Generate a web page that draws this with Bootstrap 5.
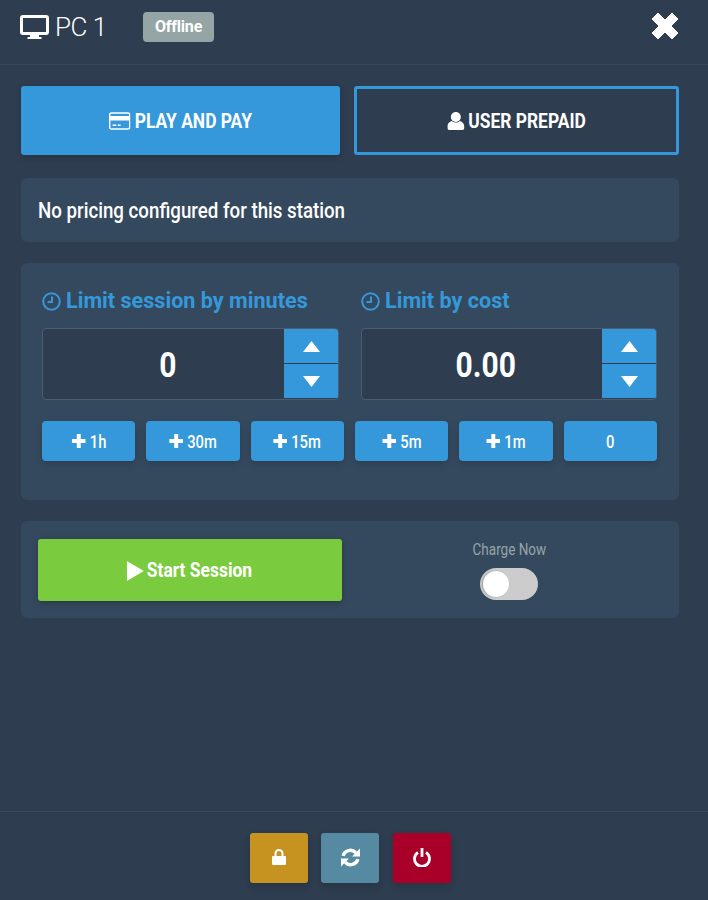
<!DOCTYPE html>
<html lang="en">
<head>
    <meta charset="UTF-8">
    <meta name="viewport" content="width=device-width, initial-scale=1.0">
    <title>PC 1</title>
    <link href="https://cdn.jsdelivr.net/npm/bootstrap@5.3.0/dist/css/bootstrap.min.css" rel="stylesheet">
    <style>
        html, body {
            height: 100%;
        }
        body {
            background-color: #2e3d4f;
            color: #fff;
            font-family: Roboto, "Liberation Sans", sans-serif;
            overflow: hidden;
        }
        .station-page {
            height: 900px;
        }
        .squeeze {
            display: inline-flex;
            align-items: center;
            white-space: nowrap;
        }
        .station-head {
            height: 65px;
            padding: 0 29px 10px 20px;
            border-bottom: 1px solid #3a4a5d;
        }
        .station-title {
            font-size: 26px;
            font-weight: 300;
            margin-left: 6px;
            width: 88px;
            letter-spacing: -.5px;
        }
        .status-tag {
            background-color: #95a5a6;
            border-radius: 4px;
            font-size: 16px;
            font-weight: 700;
            letter-spacing: -.2px;
            width: 71px;
            height: 30px;
        }
        .close-icon {
            margin-top: -3px;
        }
        .station-body {
            padding: 21px 29px 0 21px;
        }
        .mode-btn {
            height: 69px;
            padding: 0;
            border-radius: 3px;
            font-size: 20px;
            font-weight: 700;
            color: #fff;
        }
        .mode-btn .squeeze {
            transform: scaleX(.87);
            gap: 4.600px;
        }
        .mode-pay {
            width: 319px;
            margin-right: 14px;
            background-color: #3498db;
            border: 0;
            box-shadow: 0 2px 6px rgba(0, 0, 0, .18);
        }
        .mode-user {
            width: 325px;
            background-color: #2e3d4f;
            border: 3px solid #3498db;
        }
        .panel-box {
            background-color: #35495e;
            border-radius: 6px;
        }
        .notice-box {
            height: 64px;
            margin-top: 23px;
            padding: 0 0 0 17px;
            font-size: 22px;
            font-weight: 500;
        }
        .notice-box .squeeze {
            transform: scaleX(.85);
            transform-origin: left center;
        }
        .limit-box {
            height: 237px;
            margin-top: 21px;
            padding: 23px 22px 0 21px;
        }
        .limit-col {
            width: 296px;
        }
        .limit-col-wide {
            width: 297px;
        }
        .limit-label {
            color: #3498db;
            font-size: 21.600px;
            font-weight: 700;
            height: 30px;
            margin-bottom: 12px;
            gap: 5px;
        }
        .spin-wrap {
            height: 72px;
            background-color: #2e3d4f;
            border: 1px solid #4a5d75;
            border-radius: 4px;
            overflow: hidden;
        }
        .spin-value {
            font-size: 34.500px;
            font-weight: 700;
            padding: 4px 0 0 8px;
        }
        .spin-value .squeeze {
            transform: scaleX(.87);
        }
        .spin-btns {
            width: 54px;
            height: 69px;
            gap: 1px;
        }
        .spin-step {
            background-color: #3498db;
            border: 0;
            flex: 1;
            padding: 0;
        }
        .quick-btn {
            flex: 1;
            height: 40px;
            background-color: #3498db;
            border: 0;
            border-radius: 4px;
            color: #fff;
            font-size: 18px;
            font-weight: 500;
            padding: 0;
            box-shadow: 0 3px 7px rgba(0, 0, 0, .16);
        }
        .quick-btn .squeeze {
            transform: scaleX(.82);
            gap: 4.900px;
        }
        .quick-row {
            margin-top: 21px;
            gap: 11.200px;
        }
        .start-box {
            height: 97px;
            margin-top: 21px;
            padding: 18px 0 0 17px;
        }
        .start-btn {
            width: 304px;
            height: 62px;
            padding: 2px 2px 0 0;
            background-color: #7bcb3f;
            border: 0;
            border-radius: 3px;
            color: #fff;
            font-size: 21px;
            font-weight: 700;
            box-shadow: 0 2px 6px rgba(0, 0, 0, .25);
        }
        .start-btn .squeeze {
            transform: scaleX(.83);
            gap: 3.600px;
        }
        .charge-col {
            width: 334px;
            margin-top: 1px;
        }
        .charge-label {
            color: #95a5a6;
            font-size: 16.300px;
            line-height: 20px;
        }
        .charge-label .squeeze {
            transform: scaleX(.83);
        }
        .toggle-track {
            width: 58px;
            height: 32px;
            margin-top: 8px;
            background-color: #ccc;
            border-radius: 16px;
            padding: 3px 0 0 3px;
        }
        .toggle-knob {
            width: 26px;
            height: 26px;
            background-color: #fff;
            border-radius: 50%;
            box-shadow: -1px 0 2px rgba(0, 0, 0, .25);
        }
        .station-foot {
            height: 89px;
            margin-top: auto;
            padding: 21px 8px 0 0;
            gap: 13.500px;
            border-top: 1px solid #3a4a5d;
        }
        .foot-btn {
            width: 58px;
            height: 50px;
            border: 0;
            border-radius: 3px;
            padding: 0 0 2px;
            box-shadow: 0 3px 7px rgba(0, 0, 0, .16);
        }
        .foot-lock { background-color: #c69320; }
        .foot-sync { background-color: #568aa3; }
        .foot-power { background-color: #a80029; }
    </style>
</head>
<body>
    <div class="station-page d-flex flex-column">
        <!-- Header -->
        <div class="station-head d-flex align-items-center">
            <svg width="29" height="24" viewBox="0 0 29 24" fill="#fff"><path d="M3 0h23a3 3 0 0 1 3 3v14a3 3 0 0 1-3 3h-7v2h2.500v2h-14v-2H10v-2H3a3 3 0 0 1-3-3V3a3 3 0 0 1 3-3zm0 3v14h23V3z" fill-rule="evenodd"/></svg>
            <span class="station-title">PC 1</span>
            <span class="status-tag d-flex align-items-center justify-content-center">Offline</span>
            <svg class="close-icon ms-auto" width="28" height="28" viewBox="0 0 28 28" fill="#fff"><path d="M7 1l7 7 7-7 6 6-7 7 7 7-6 6-7-7-7 7-6-6 7-7-7-7z" stroke="#fff" stroke-linejoin="round"/></svg>
        </div>

        <div class="station-body">
            <!-- Mode buttons -->
            <div class="d-flex">
                <button class="btn mode-btn mode-pay d-flex align-items-center justify-content-center">
                    <span class="squeeze">
                        <svg width="25.300" height="18" viewBox="0 0 23 18" preserveAspectRatio="none"><rect x="1" y="1" width="21" height="16" rx="2" fill="none" stroke="#fff" stroke-width="1.600"/><rect x="1" y="4" width="21" height="4.500" fill="#fff"/><rect x="4" y="12.500" width="4" height="1.500" fill="#fff"/><rect x="9.500" y="12.500" width="3" height="1.500" fill="#fff"/></svg>
                        PLAY AND PAY
                    </span>
                </button>
                <button class="btn mode-btn mode-user d-flex align-items-center justify-content-center">
                    <span class="squeeze">
                        <svg width="19.500" height="18" viewBox="0 0 17 18" preserveAspectRatio="none" fill="#fff"><ellipse cx="8.500" cy="5" rx="5" ry="5"/><path d="M0 14.500c0-3 2-4.500 4.500-5.500 2.500 2 5.500 2 8 0 2.500 1 4.500 2.500 4.500 5.500v1.500a2 2 0 0 1-2 2H2a2 2 0 0 1-2-2z"/></svg>
                        USER PREPAID
                    </span>
                </button>
            </div>

            <!-- Pricing notice -->
            <div class="panel-box notice-box d-flex align-items-center"><span class="squeeze">No pricing configured for this station</span></div>

            <!-- Limits -->
            <div class="panel-box limit-box">
                <div class="d-flex justify-content-between">
                    <div class="limit-col-wide">
                        <div class="limit-label d-flex align-items-center">
                            <svg width="19" height="19" viewBox="0 0 19 19" fill="none" stroke="#3498db" stroke-width="2"><circle cx="9.500" cy="9.500" r="8.300"/><path d="M10 4.500v5.500H5.500"/></svg>
                            Limit session by minutes
                        </div>
                        <div class="spin-wrap d-flex">
                            <div class="spin-value flex-grow-1 d-flex align-items-center justify-content-center"><span class="squeeze">0</span></div>
                            <div class="spin-btns d-flex flex-column">
                                <button class="spin-step d-flex align-items-center justify-content-center" aria-label="Up"><svg width="17" height="11" viewBox="0 0 17 11" fill="#fff"><path d="M8.500 0L17 11H0z"/></svg></button>
                                <button class="spin-step d-flex align-items-center justify-content-center" aria-label="Down"><svg width="17" height="11" viewBox="0 0 17 11" fill="#fff"><path d="M0 0h17L8.500 11z"/></svg></button>
                            </div>
                        </div>
                    </div>
                    <div class="limit-col">
                        <div class="limit-label d-flex align-items-center">
                            <svg width="19" height="19" viewBox="0 0 19 19" fill="none" stroke="#3498db" stroke-width="2"><circle cx="9.500" cy="9.500" r="8.300"/><path d="M10 4.500v5.500H5.500"/></svg>
                            Limit by cost
                        </div>
                        <div class="spin-wrap d-flex">
                            <div class="spin-value flex-grow-1 d-flex align-items-center justify-content-center"><span class="squeeze">0.00</span></div>
                            <div class="spin-btns d-flex flex-column">
                                <button class="spin-step d-flex align-items-center justify-content-center" aria-label="Up"><svg width="17" height="11" viewBox="0 0 17 11" fill="#fff"><path d="M8.500 0L17 11H0z"/></svg></button>
                                <button class="spin-step d-flex align-items-center justify-content-center" aria-label="Down"><svg width="17" height="11" viewBox="0 0 17 11" fill="#fff"><path d="M0 0h17L8.500 11z"/></svg></button>
                            </div>
                        </div>
                    </div>
                </div>
                <div class="quick-row d-flex" id="quickRow"></div>
            </div>

            <!-- Start session -->
            <div class="panel-box start-box d-flex">
                <button class="btn start-btn d-flex align-items-center justify-content-center">
                    <span class="squeeze">
                        <svg width="20.500" height="20" viewBox="0 0 17 20" preserveAspectRatio="none" fill="#fff"><path d="M0 0l17 10L0 20z"/></svg>
                        Start Session
                    </span>
                </button>
                <div class="charge-col d-flex flex-column align-items-center">
                    <div class="charge-label"><span class="squeeze">Charge Now</span></div>
                    <div class="toggle-track"><div class="toggle-knob"></div></div>
                </div>
            </div>
        </div>

        <!-- Footer actions -->
        <div class="station-foot d-flex justify-content-center">
            <button class="foot-btn foot-lock d-flex align-items-center justify-content-center" aria-label="Lock">
                <svg width="14" height="16" viewBox="0 0 14 16" fill="#fff"><path d="M1 7h12a1 1 0 0 1 1 1v7a1 1 0 0 1-1 1H1a1 1 0 0 1-1-1V8a1 1 0 0 1 1-1z"/><path d="M3.500 7.500V4.500a3.500 3.500 0 0 1 7 0v3" fill="none" stroke="#fff" stroke-width="2"/></svg>
            </button>
            <button class="foot-btn foot-sync d-flex align-items-center justify-content-center" aria-label="Refresh">
                <svg width="19" height="19" viewBox="0 0 18 18" fill="none" stroke="#fff" stroke-width="3.200"><path d="M2 7.500A7 7 0 0 1 14 4.500"/><path d="M16 10.500A7 7 0 0 1 4 13.500"/><path d="M18 .5v7.500h-7.500z" fill="#fff" stroke="none"/><path d="M0 17.500V10h7.500z" fill="#fff" stroke="none"/></svg>
            </button>
            <button class="foot-btn foot-power d-flex align-items-center justify-content-center" aria-label="Power">
                <svg width="18" height="19" viewBox="0 0 18 19" fill="none" stroke="#fff" stroke-width="2.800"><path d="M5 4.500a7.500 7.500 0 1 0 8 0"/><path d="M9 0v9" /></svg>
            </button>
        </div>
    </div>

    <script>
        const plusIcon = '<svg width="17" height="14" viewBox="0 0 14 14" preserveAspectRatio="none" fill="#fff"><path d="M5 0h4v5h5v4H9v5H5V9H0V5h5z"/></svg>';

        // Quick add buttons
        ['1h', '30m', '15m', '5m', '1m', '0'].forEach((label) => {
            const icon = label === '0' ? '' : plusIcon;
            document.getElementById('quickRow').insertAdjacentHTML('beforeend',
                `<button class="quick-btn d-flex align-items-center justify-content-center"><span class="squeeze">${icon}${label}</span></button>`);
        });
    </script>
    <script src="https://cdn.jsdelivr.net/npm/bootstrap@5.3.0/dist/js/bootstrap.bundle.min.js"></script>
</body>
</html>
